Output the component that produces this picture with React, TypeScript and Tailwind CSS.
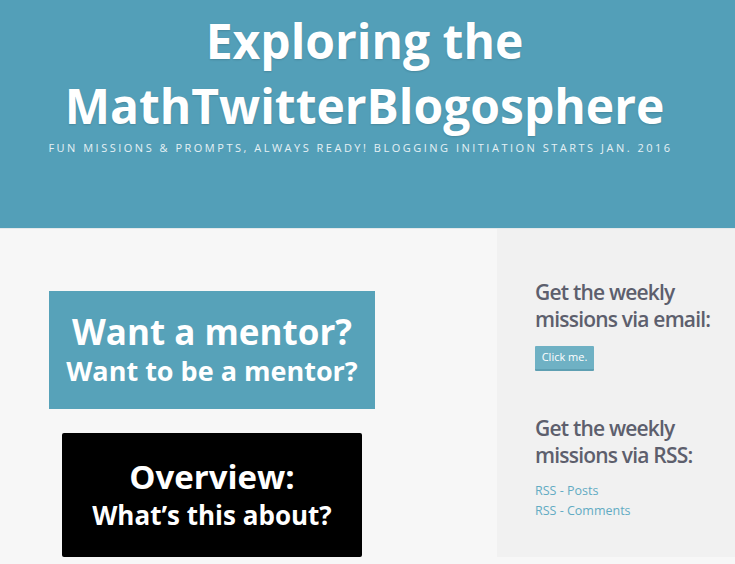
export default function App() {
  return (
    <div className="min-h-[564px] w-full bg-[#f7f7f7] font-['Open_Sans',sans-serif]">
      <header className="h-[228px] bg-[#539fb8] pt-[8px] text-center text-white">
        <h1 className="pr-[6px] text-[48px] font-bold leading-[65px] [text-shadow:0_1px_2px_rgba(0,0,0,0.15)]">
          Exploring the
          <br />
          MathTwitterBlogosphere
        </h1>
        <p className="mt-[2px] pr-[14px] text-[11px] uppercase tracking-[2.5px] text-[#e6f1f5]">
          Fun missions &amp; prompts, always ready! Blogging initiation starts Jan. 2016
        </p>
      </header>

      <div className="flex border-t border-[#e4e8ea]">
        <main className="w-[497px] pt-[62px]">
          <div className="ml-[49px] flex h-[118px] w-[326px] flex-col items-center justify-center bg-[#57a2b9] text-white">
            <div className="text-[35px] font-bold leading-[42px]">Want a mentor?</div>
            <div className="text-[27px] font-bold leading-[36px]">Want to be a mentor?</div>
          </div>
          <div className="ml-[62px] mt-[24px] flex h-[124px] w-[300px] flex-col items-center justify-center rounded-[2px] bg-black text-white">
            <div className="text-[33px] font-bold leading-[40px]">Overview:</div>
            <div className="text-[26px] font-bold leading-[36px]">What’s this about?</div>
          </div>
        </main>

        <aside className="flex-1 bg-[#f1f1f1] pl-[38px] pt-[50px] text-[#5d5f6d]">
          <h3 className="text-[21px] font-semibold leading-[27px] tracking-[-0.8px]">
            Get the weekly
            <br />
            missions via email:
          </h3>
          <button className="mt-[13px] h-[25px] w-[59px] rounded-[1px] border-b-2 border-[#5e9fb2] bg-[#6fb1c4] text-[11px] text-white">
            Click me.
          </button>
          <h3 className="mt-[44px] text-[21px] font-semibold leading-[27px] tracking-[-0.8px]">
            Get the weekly
            <br />
            missions via RSS:
          </h3>
          <ul className="mt-[12px] text-[12.5px] leading-[20px] text-[#62abc3]">
            <li>RSS - Posts</li>
            <li>RSS - Comments</li>
          </ul>
        </aside>
      </div>
    </div>
  );
}
